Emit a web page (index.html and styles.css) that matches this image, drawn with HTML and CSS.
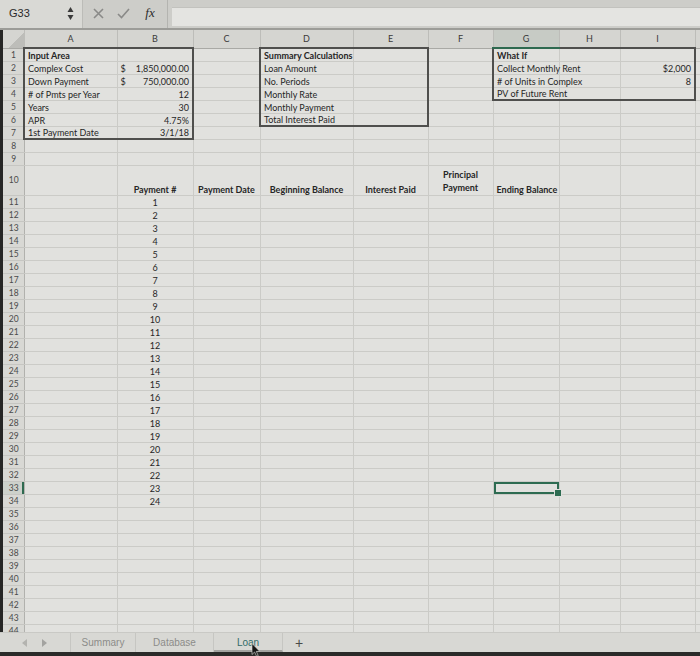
FILE: index.html
```html
<!DOCTYPE html>
<html lang="en">

<head>
  <meta charset="UTF-8">
  <meta name="viewport" content="width=device-width, initial-scale=1.0">
  <title>Loan</title>
  <link rel="stylesheet" href="styles.css">
</head>

<body>
  <div class="screen">
    <div class="formula_bar">
      <div class="name_box">
        <span class="cell_ref">G33</span>
        <svg class="spin" width="7" height="15" viewBox="0 0 7 15">
          <path d="M3.5 1 L6.5 6 L0.5 6 Z" fill="#3a3a3a" />
          <path d="M3.5 14 L6.5 9 L0.5 9 Z" fill="#3a3a3a" />
        </svg>
      </div>
      <div class="fx_tools">
        <span class="tool cancel">
          <svg width="11" height="11" viewBox="0 0 11 11">
            <path d="M1 1 L10 10 M10 1 L1 10" stroke="#8a8a88" stroke-width="1.6" fill="none" />
          </svg>
        </span>
        <span class="tool enter">
          <svg width="13" height="11" viewBox="0 0 13 11">
            <path d="M1 6 L4.5 9.5 L12 1" stroke="#8a8a88" stroke-width="1.6" fill="none" />
          </svg>
        </span>
        <span class="tool fx">fx</span>
      </div>
      <div class="formula_input"></div>
    </div>

    <div class="sheet">
      <table class="grid">
        <colgroup>
          <col class="c_rh">
          <col class="c_a">
          <col class="c_b">
          <col class="c_c">
          <col class="c_d">
          <col class="c_e">
          <col class="c_f">
          <col class="c_g">
          <col class="c_h">
          <col class="c_i">
          <col class="c_j">
        </colgroup>
        <thead>
          <tr>
            <th class="corner"></th>
            <th>A</th>
            <th>B</th>
            <th>C</th>
            <th>D</th>
            <th>E</th>
            <th>F</th>
            <th class="active_col">G</th>
            <th>H</th>
            <th>I</th>
            <th></th>
          </tr>
        </thead>
        <tbody id="rows">
          <tr>
            <th class="rh">1</th>
            <td class="bold bt bl">Input Area</td>
            <td class="bt br"></td>
            <td></td>
            <td class="bold bt bl">Summary Calculations</td>
            <td class="bt br"></td>
            <td></td>
            <td class="bold bt bl">What If</td>
            <td class="bt"></td>
            <td class="bt br"></td>
            <td></td>
          </tr>
          <tr>
            <th class="rh">2</th>
            <td class="bl">Complex Cost</td>
            <td class="br"><div class="acct"><span>$</span><span>1,850,000.00</span></div></td>
            <td></td>
            <td class="bl">Loan Amount</td>
            <td class="br"></td>
            <td></td>
            <td class="bl">Collect Monthly Rent</td>
            <td></td>
            <td class="num br">$2,000</td>
            <td></td>
          </tr>
          <tr>
            <th class="rh">3</th>
            <td class="bl">Down Payment</td>
            <td class="br"><div class="acct"><span>$</span><span>750,000.00</span></div></td>
            <td></td>
            <td class="bl">No. Periods</td>
            <td class="br"></td>
            <td></td>
            <td class="bl"># of Units in Complex</td>
            <td></td>
            <td class="num br">8</td>
            <td></td>
          </tr>
          <tr>
            <th class="rh">4</th>
            <td class="bl"># of Pmts per Year</td>
            <td class="num br">12</td>
            <td></td>
            <td class="bl">Monthly Rate</td>
            <td class="br"></td>
            <td></td>
            <td class="bl bb">PV of Future Rent</td>
            <td class="bb"></td>
            <td class="br bb"></td>
            <td></td>
          </tr>
          <tr>
            <th class="rh">5</th>
            <td class="bl">Years</td>
            <td class="num br">30</td>
            <td></td>
            <td class="bl">Monthly Payment</td>
            <td class="br"></td>
            <td></td>
            <td></td>
            <td></td>
            <td></td>
            <td></td>
          </tr>
          <tr>
            <th class="rh">6</th>
            <td class="bl">APR</td>
            <td class="num br">4.75%</td>
            <td></td>
            <td class="bl bb">Total Interest Paid</td>
            <td class="br bb"></td>
            <td></td>
            <td></td>
            <td></td>
            <td></td>
            <td></td>
          </tr>
          <tr>
            <th class="rh">7</th>
            <td class="bl bb">1st Payment Date</td>
            <td class="num br bb">3/1/18</td>
            <td></td>
            <td></td>
            <td></td>
            <td></td>
            <td></td>
            <td></td>
            <td></td>
            <td></td>
          </tr>
          <tr>
            <th class="rh">8</th>
            <td></td><td></td><td></td><td></td><td></td><td></td><td></td><td></td><td></td><td></td>
          </tr>
          <tr>
            <th class="rh">9</th>
            <td></td><td></td><td></td><td></td><td></td><td></td><td></td><td></td><td></td><td></td>
          </tr>
          <tr class="tall">
            <th class="rh">10</th>
            <td></td>
            <td class="bold center">Payment #</td>
            <td class="bold center">Payment Date</td>
            <td class="bold center">Beginning Balance</td>
            <td class="bold center">Interest Paid</td>
            <td class="bold center wrap">Principal<br>Payment</td>
            <td class="bold center">Ending Balance</td>
            <td></td>
            <td></td>
            <td></td>
          </tr>
        </tbody>
      </table>
    </div>

    <div class="sheet_tabs">
      <div class="tab_nav">
        <svg width="6" height="8" viewBox="0 0 6 8"><path d="M5 0 L0 4 L5 8 Z" fill="#b3b3af" /></svg>
        <svg width="6" height="8" viewBox="0 0 6 8"><path d="M1 0 L6 4 L1 8 Z" fill="#a3a3a0" /></svg>
      </div>
      <span class="tab">Summary</span>
      <span class="tab tab_db">Database</span>
      <span class="tab active">Loan</span>
      <span class="add_tab">+</span>
    </div>
    <div class="bezel"></div>

    <!-- 마우스 커서 -->
    <svg class="cursor" width="10" height="14" viewBox="0 0 10 14">
      <path d="M1 0.5 L1 11.5 L3.6 9 L5.6 13.3 L7.2 12.6 L5.3 8.4 L8.8 8.4 Z" fill="#151515" stroke="#e0e0dc" stroke-width="0.6" />
    </svg>
  </div>

  <script>
    const rows = document.querySelector('#rows');

    for (let r = 11; r <= 44; r++) {
      const tr = document.createElement('tr');
      const payment = r <= 34 ? r - 10 : '';
      let html = `<th class="rh${r === 33 ? ' active_row' : ''}">${r}</th>`;

      html += '<td></td>';
      html += `<td class="center">${payment}</td>`;
      html += '<td></td><td></td><td></td><td></td>';
      html += `<td${r === 33 ? ' class="selected"' : ''}></td>`;
      html += '<td></td><td></td><td></td>';

      tr.innerHTML = html;
      rows.appendChild(tr);
    }
  </script>
</body>

</html>
```

FILE: styles.css
```css
* {
  box-sizing: border-box;
  margin: 0;
}

body {
  background: #1f1f1e;
}

.screen {
  position: relative;
  overflow: hidden;
  width: 700px;
  height: 656px;
  background: #dededb;
  font-family: Lato, "Open Sans", sans-serif;
}

/* 수식 입력줄 */
.formula_bar {
  display: flex;
  height: 30px;
  background: #cdcdc9;
  border-bottom: 2px solid #9c9c98;
}

.name_box {
  display: flex;
  align-items: center;
  justify-content: space-between;
  width: 82px;
  padding: 0 8px 2px 9px;
  background: #d9d9d5;
}

.cell_ref {
  font: 11px "Liberation Sans", sans-serif;
  color: #2a2a2a;
}

.fx_tools {
  display: flex;
  align-items: center;
  width: 86px;
  padding: 0 0 2px 3px;
  border-left: 1px solid #bcbcb8;
  border-right: 1px solid #b4b4b0;
}

.tool {
  display: flex;
  justify-content: center;
  width: 25px;
}

.fx {
  font: italic 13px "Liberation Serif", serif;
  color: #2c2c2c;
  width: 28px;
}

.formula_input {
  flex: 1;
  margin: 7px 0 2px 4px;
  background: #e4e4e1;
  border-top: 1px solid #c2c2be;
}

/* 시트 */
.sheet {
  overflow: hidden;
  height: 602px;
  border-left: 3px solid #262625;
}

.grid {
  table-layout: fixed;
  width: 717px;
  border-collapse: collapse;
  background: #e1e1de;
  color: #262626;
}

.c_rh { width: 21px; }
.c_a { width: 93px; }
.c_b { width: 76px; }
.c_c { width: 67px; }
.c_d { width: 93px; }
.c_e { width: 75px; }
.c_f { width: 65px; }
.c_g { width: 66px; }
.c_h { width: 61px; }
.c_i { width: 75px; }
.c_j { width: 25px; }

.grid thead th {
  height: 18px;
  background: #d5d5d1;
  border-right: 1px solid #bdbdb9;
  border-bottom: 1px solid #a9a9a5;
  font-size: 9px;
  font-weight: 400;
  color: #3a3a3a;
}

.grid thead .corner {
  background: linear-gradient(135deg, #d5d5d1 60%, #bdbdb9 60%);
}

.grid thead .active_col {
  background: #c7cbc5;
  border-bottom: 2px solid #2e6a50;
}

.grid tbody tr {
  height: 13px;
}

.grid tbody tr.tall {
  height: 30px;
}

.grid .rh {
  padding: 0 0 0 1px;
  background: #d8d8d4;
  border-right: 1px solid #b1b1ad;
  border-bottom: 1px solid #c6c6c2;
  font-size: 8.5px;
  font-weight: 400;
  color: #4a4a4a;
  text-align: center;
  vertical-align: middle;
}

.grid .active_row {
  background: #cdd1cb;
  box-shadow: inset -2px 0 #2e6a50;
}

.grid td {
  padding: 0 3px;
  border: 1px solid #cbcbc7;
  font-size: 9px;
  line-height: 11px;
  white-space: nowrap;
  vertical-align: bottom;
}

.grid .bold {
  font-weight: 700;
}

.grid .center {
  text-align: center;
}

.grid .num {
  text-align: right;
}

.grid .wrap {
  line-height: 13px;
  padding-bottom: 1px;
}

.acct {
  display: flex;
  justify-content: space-between;
}

/* 테두리 상자 */
.grid .bt { border-top: 2px solid #4f4f4d; }
.grid .bb { border-bottom: 2px solid #4f4f4d; }
.grid .bl { border-left: 2px solid #4f4f4d; }
.grid .br { border-right: 2px solid #4f4f4d; }

.grid .selected {
  position: relative;
  box-shadow: inset 0 0 0 2px #2d6b51;
}

.grid .selected::after {
  content: "";
  position: absolute;
  right: -3px;
  bottom: -3px;
  width: 6px;
  height: 6px;
  background: #2d6b51;
  border: 1px solid #e1e1de;
}

/* 시트 탭 */
.sheet_tabs {
  display: flex;
  align-items: center;
  height: 20px;
  padding-left: 3px;
  background: #d8d8d4;
  border-top: 1px solid #c9c9c5;
  font: 10px "Liberation Sans", sans-serif;
  color: #8c8c89;
}

.tab_nav {
  display: flex;
  align-items: center;
  gap: 13px;
  width: 68px;
  height: 100%;
  padding-left: 19px;
  border-right: 1px solid #c6c6c2;
}

.tab {
  display: flex;
  align-items: center;
  justify-content: center;
  width: 65px;
  height: 100%;
  border-right: 1px solid #c6c6c2;
}

.tab_db {
  width: 78px;
}

.tab.active {
  width: 69px;
  color: #2f6b67;
  border-bottom: 2px solid #a3a3a0;
  padding-top: 2px;
}

.add_tab {
  padding-left: 12px;
  font-size: 14px;
  color: #4a4a4a;
}

.bezel {
  height: 4px;
  background: #2b2b29;
}

.cursor {
  position: absolute;
  left: 251px;
  top: 643px;
}
```
